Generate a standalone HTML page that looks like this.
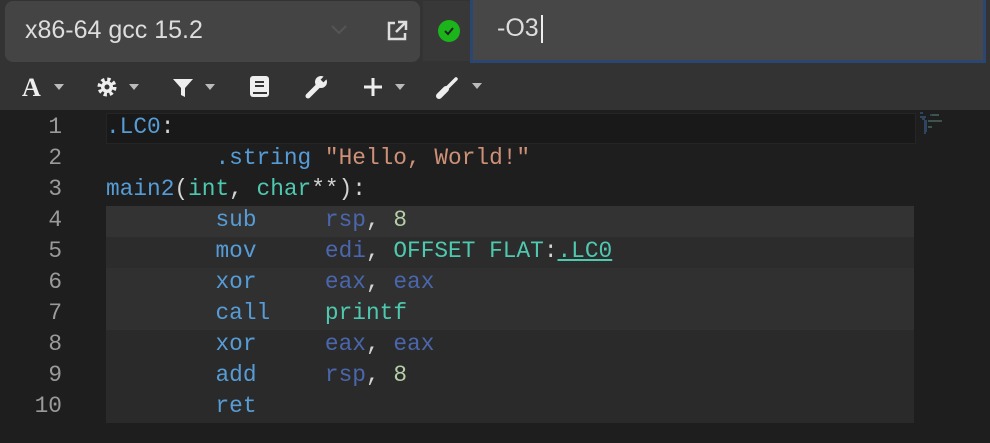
<!DOCTYPE html><html><head><style>
body{margin:0;width:990px;height:443px;background:#1e1e1e;overflow:hidden;font-family:"Liberation Sans",sans-serif;position:relative}
.top{position:absolute;left:0;top:0;width:990px;height:65px;background:#333}
.sel{position:absolute;left:5px;top:1px;width:415px;height:61px;background:#444;border-radius:8px}
.sel span{position:absolute;left:20px;top:15px;color:#ddd;font-size:25px}
.stat{position:absolute;left:423px;top:1px;width:47px;height:60px;background:#383838}
.inp{position:absolute;left:470px;top:-2px;width:510px;height:62px;background:#474747;border:3px solid #2b4670;border-top:none}
.inp span{position:absolute;left:24px;top:16px;color:#ddd;font-size:25px}
.tb{position:absolute;left:0;top:65px;width:990px;height:45px;background:#333}
.code{position:absolute;left:0;top:110px;width:990px;height:333px;background:#1e1e1e;font-family:"Liberation Mono",monospace;font-size:22.8px}
.ln{position:absolute;left:0;width:62px;text-align:right;color:#9a9a9a;height:31px;line-height:31px}
.l{position:absolute;left:106px;width:808px;height:31px;line-height:31px;white-space:pre;color:#d4d4d4}
.b{color:#569cd6}.s{color:#ce9178}.t{color:#4ec9b0}.r{color:#4a66ac}.n{color:#b5cea8}
</style></head><body>
<div class="top">
<div class="sel"><span>x86-64 gcc 15.2</span>
<svg style="position:absolute;left:326px;top:24px" width="16" height="10"><path d="M1 1l7 7 7-7" stroke="#555" stroke-width="2" fill="none"/></svg>
<svg style="position:absolute;left:380px;top:18px" width="24" height="24"><path d="M10 4H4v16h16v-6" stroke="#ddd" stroke-width="2.5" fill="none"/><path d="M13 3h8v8M21 3l-10 10" stroke="#ddd" stroke-width="2.5" fill="none"/></svg>
</div>
<div class="stat"><svg style="position:absolute;left:15px;top:19px" width="22" height="22"><circle cx="11" cy="11" r="11" fill="#1bb51b"/><path d="M7 11l3 3 5-6" stroke="#222" stroke-width="2" fill="none"/></svg></div>
<div class="inp"><span>-O3<span style="position:relative;left:2px;top:0;border-left:2px solid #eee;height:28px;display:inline-block;vertical-align:middle"></span></span></div>
</div>
<div class="tb">
<svg style="position:absolute;left:22px;top:10px" width="46" height="24"><text x="0" y="21" font-family="Liberation Serif" font-weight="bold" font-size="26" fill="#eee">A</text><path d="M32 9h10l-5 6z" fill="#bbb"/></svg>
<svg style="position:absolute;left:96px;top:10px" width="48" height="24"><circle cx="11" cy="12" r="7" stroke="#eee" stroke-width="5" stroke-dasharray="3 2.5" fill="none"/><circle cx="11" cy="12" r="6" fill="#eee"/><circle cx="11" cy="12" r="2.5" fill="#333"/><path d="M33 9h10l-5 6z" fill="#bbb"/></svg>
<svg style="position:absolute;left:172px;top:10px" width="48" height="24"><path d="M1 4h20l-8 9v9l-4-2v-7z" fill="#eee"/><path d="M33 9h10l-5 6z" fill="#bbb"/></svg>
<svg style="position:absolute;left:248px;top:9px" width="24" height="26"><rect x="2" y="2" width="19" height="21" rx="3" fill="#eee"/><path d="M7 8h9M7 12h9M5 19h14" stroke="#333" stroke-width="2"/></svg>
<svg style="position:absolute;left:304px;top:9px" width="26" height="26"><path d="M4 22L15 11" stroke="#eee" stroke-width="5" stroke-linecap="round"/><circle cx="17" cy="8" r="6" fill="#eee"/><path d="M18 7l5-5" stroke="#333" stroke-width="4"/></svg>
<svg style="position:absolute;left:362px;top:10px" width="48" height="24"><path d="M11 3v18M2 12h18" stroke="#eee" stroke-width="3"/><path d="M33 9h10l-5 6z" fill="#bbb"/></svg>
<svg style="position:absolute;left:434px;top:9px" width="50" height="26"><path d="M5 22l7-7" stroke="#eee" stroke-width="6" stroke-linecap="round"/><path d="M12 15l10-10" stroke="#eee" stroke-width="3.5" stroke-linecap="round"/><path d="M38 9h10l-5 6z" fill="#bbb"/></svg>
</div>
<div class="code">
<div style="position:absolute;left:106px;top:3px;width:808px;height:29px;background:#191919;border:1px solid #252525"></div>
<div style="position:absolute;left:106px;top:96px;width:808px;height:31px;background:#333"></div>
<div style="position:absolute;left:106px;top:127px;width:808px;height:31px;background:#2c2c2c"></div>
<div style="position:absolute;left:106px;top:158px;width:808px;height:62px;background:#303030"></div>
<div style="position:absolute;left:106px;top:220px;width:808px;height:93px;background:#2a2a2a"></div>
<div class="ln" style="top:2px">1</div><div class="ln" style="top:33px">2</div><div class="ln" style="top:64px">3</div><div class="ln" style="top:95px">4</div><div class="ln" style="top:126px">5</div><div class="ln" style="top:157px">6</div><div class="ln" style="top:188px">7</div><div class="ln" style="top:219px">8</div><div class="ln" style="top:250px">9</div><div class="ln" style="top:281px">10</div>
<div class="l" style="top:2px"><span class="b">.LC0</span>:</div>
<div class="l" style="top:33px">        <span class="b">.string</span> <span class="s">"Hello, World!"</span></div>
<div class="l" style="top:64px"><span class="b">main2</span>(<span class="t">int</span>, <span class="t">char</span>**):</div>
<div class="l" style="top:95px">        <span class="b">sub</span>     <span class="r">rsp</span>, <span class="n">8</span></div>
<div class="l" style="top:126px">        <span class="b">mov</span>     <span class="r">edi</span>, <span class="t">OFFSET FLAT</span>:<span class="t" style="text-decoration:underline">.LC0</span></div>
<div class="l" style="top:157px">        <span class="b">xor</span>     <span class="r">eax</span>, <span class="r">eax</span></div>
<div class="l" style="top:188px">        <span class="b">call</span>    <span class="t">printf</span></div>
<div class="l" style="top:219px">        <span class="b">xor</span>     <span class="r">eax</span>, <span class="r">eax</span></div>
<div class="l" style="top:250px">        <span class="b">add</span>     <span class="r">rsp</span>, <span class="n">8</span></div>
<div class="l" style="top:281px">        <span class="b">ret</span></div>
<svg style="position:absolute;left:918px;top:2px" width="40" height="28"><g stroke-width="1"><path d="M2 1h3M12 3h2M2 5h6M4 7h3M6 9h3M6 11h3M6 13h3M6 15h3M6 17h3M6 19h3M6 21h2" stroke="#3a6ea5"/><path d="M14 3h7M10 9h14M10 15h4" stroke="#5a8a7a"/></g></svg>
</div>
</body></html>
